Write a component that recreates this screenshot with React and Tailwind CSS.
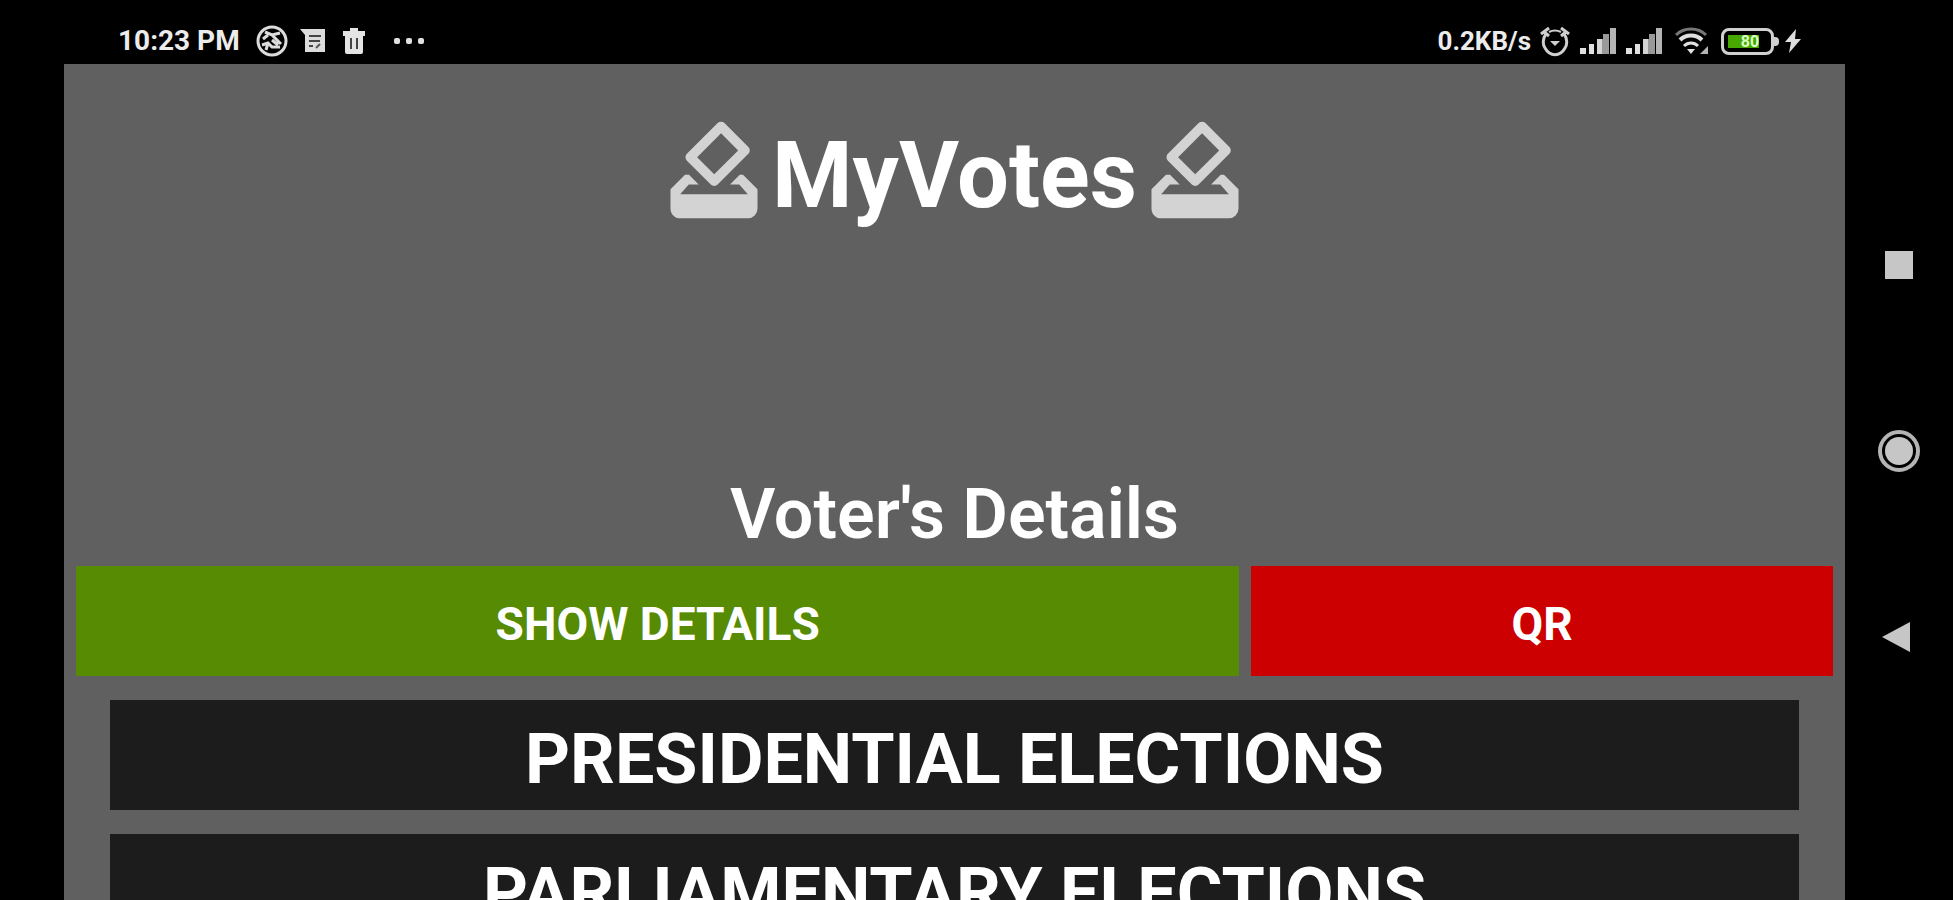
import React, { useState } from 'react'
import { MdHowToVote } from 'react-icons/md'

const elections = [
  { id: 1, label: 'PRESIDENTIAL ELECTIONS' },
  { id: 2, label: 'PARLIAMENTARY ELECTIONS' },
];

const NoteIcon = () => (
  <svg viewBox="0 0 26 24" className="w-[26px] h-6" fill="none">
    <path d="M0 0h25v23H5V6z" fill="#dcdcdc" />
    <path d="M9 7h12M9 12h11M9 17h4" stroke="#444" strokeWidth="2" />
    <path d="M16 19l4-4" stroke="#555" strokeWidth="2" />
  </svg>
);

const TrashIcon = () => (
  <svg viewBox="0 0 24 28" className="w-6 h-7" fill="none">
    <path d="M8 1h8v3h7v5H1V4h7z" fill="#e4e4e4" />
    <path d="M3 8h18v17a2 2 0 0 1-2 2H5a2 2 0 0 1-2-2z" fill="#e4e4e4" />
    <path d="M9 11v11M15 11v11" stroke="#444" strokeWidth="2" />
  </svg>
);

const ShutterIcon = () => (
  <svg viewBox="0 0 32 32" className="w-8 h-8" fill="none" stroke="#dcdcdc" strokeWidth="3">
    <circle cx="16" cy="16" r="14" />
    <path d="M9 7l7 3 8-2M16 10l9 9M7 14l5-4M6 20l6-2 4 4h8M10 25l2-7M16 15l6 5" />
  </svg>
);

const AlarmIcon = () => (
  <svg viewBox="0 0 32 32" className="w-8 h-8" fill="none" stroke="#cfcfcf" strokeWidth="3">
    <path d="M7 9C3 14 4 20 6 23c5 9 15 9 20 0 2-3 3-9-1-14" />
    <path d="M10 7q6-3 12 0" strokeWidth="2" />
    <path d="M2 9l8-6M30 9l-8-6M4 6l6 5M28 6l-6 5" />
    <path d="M11 16h10l-5 5z" fill="#cfcfcf" stroke="none" />
  </svg>
);

const SignalIcon = () => (
  <svg viewBox="0 0 38 26" className="w-[38px] h-[26px]">
    <path d="M1 20h6v6H1zM10 16h5v10h-5z" fill="#e0e0e0" />
    <path d="M18 11h5v15h-5z" fill="#d4d4d4" />
    <path d="M23 11h1V6h6v20h-7z" fill="#999" />
    <path d="M31 0h6v26h-6z" fill="#b4b4b4" />
  </svg>
);

const WifiIcon = () => (
  <svg viewBox="0 0 34 28" className="w-[34px] h-7" fill="none">
    <path d="M1 8C9 0 23 0 31 8" stroke="#777" strokeWidth="3" />
    <path d="M5 13c6-6 16-6 22 0" stroke="#e0e0e0" strokeWidth="4" />
    <path d="M9 19c4-4 10-4 14 0" stroke="#e0e0e0" strokeWidth="3" />
    <path d="M12 22h8l-4 5z" fill="#e0e0e0" />
    <path d="M33 19v8h-8z" fill="#b5b5b5" />
  </svg>
);

const Battery = ({ level }) => (
  <div className="flex items-center">
    <div className="w-[53px] h-[27px] rounded-lg border-3 border-[#d0d0d0] p-1">
      <div
        className="h-full bg-[#48a800] text-[#d9ffc4] text-[16px] leading-[14px] font-bold text-right"
        style={{ width: `${level}%` }}
      >
        {level}
      </div>
    </div>
    <div className="w-[5px] h-[9px] rounded-r bg-[#d0d0d0]" />
  </div>
);

const StatusBar = () => (
  <header className="h-16 shrink-0 pl-[54px] pr-11 pt-[18px] flex items-center justify-between text-[#ececec] text-[28px] leading-8 font-bold">
    <div className="flex items-center">
      <span>10:23 PM</span>
      <span className="ml-4"><ShutterIcon /></span>
      <span className="ml-3"><NoteIcon /></span>
      <span className="ml-4"><TrashIcon /></span>
      <span className="ml-7 flex gap-[6px]">
        <i className="size-[6px] rounded-xs bg-[#e0e0e0]" />
        <i className="size-[6px] rounded-xs bg-[#e0e0e0]" />
        <i className="size-[6px] rounded-xs bg-[#e0e0e0]" />
      </span>
    </div>

    <div className="flex items-center">
      <span className="text-[26px]">0.2KB/s</span>
      <span className="ml-2"><AlarmIcon /></span>
      <span className="ml-2"><SignalIcon /></span>
      <span className="ml-2"><SignalIcon /></span>
      <span className="ml-3"><WifiIcon /></span>
      <span className="ml-3"><Battery level={80} /></span>
      <svg viewBox="0 0 16 24" className="ml-1.5 w-4 h-6" fill="#dedede">
        <path d="M11 0L0 13h6L4 24l12-14h-6z" />
      </svg>
    </div>
  </header>
);

const NavBar = () => (
  <nav className="w-[108px] shrink-0 pt-0.5 flex flex-col items-center justify-center gap-36">
    <button aria-label="Recent apps" className="size-[42px] flex items-center justify-center">
      <span className="size-7 bg-[#c6c6c6]" />
    </button>
    <button aria-label="Home" className="size-[42px]">
      <svg viewBox="0 0 42 42" className="size-full">
        <circle cx="21" cy="21" r="19" fill="none" stroke="#b4b4b4" strokeWidth="4" />
        <circle cx="21" cy="21" r="14" fill="#c6c6c6" />
      </svg>
    </button>
    <button aria-label="Back" className="size-[42px]">
      <svg viewBox="0 0 42 42" className="size-full" fill="#c6c6c6">
        <path d="M4 21L32 6v30z" />
      </svg>
    </button>
  </nav>
);

const App = () => {
  const [selected, setSelected] = useState(null);

  return (
    <div className="h-screen overflow-hidden bg-black flex font-[Roboto,sans-serif] text-white">
      <div className="flex-1 min-w-0 flex flex-col pl-16">
        <StatusBar />

        <main className="flex-1 min-h-0 overflow-hidden bg-[#606060] pt-12">
          <div className="flex items-center justify-center">
            <MdHowToVote className="size-[116px] text-[#d3d3d3]" />
            <h1 className="pt-3 text-[92px] leading-[104px] font-bold">MyVotes</h1>
            <MdHowToVote className="size-[116px] text-[#d3d3d3]" />
          </div>

          <h2 className="mt-[246px] text-center text-[70px] leading-[80px] font-semibold">Voter's Details</h2>

          <div className="mt-3 px-3 grid grid-cols-[2fr_1fr] gap-3 text-[46px] leading-[46px] font-bold">
            <button className="h-[110px] pt-1.5 bg-[#568b03]">SHOW DETAILS</button>
            <button className="h-[110px] pt-1.5 bg-[#cc0000]">QR</button>
          </div>

          <div className="mt-6 px-[46px] flex flex-col gap-6">
            {elections.map((item) => (
              <button
                key={item.id}
                onClick={() => setSelected(item.id)}
                aria-pressed={selected === item.id}
                className="h-[110px] pt-2 bg-[#1c1c1c] text-[70px] leading-[80px] font-bold"
              >
                {item.label}
              </button>
            ))}
          </div>
        </main>
      </div>

      <NavBar />
    </div>
  );
};

export default App;
